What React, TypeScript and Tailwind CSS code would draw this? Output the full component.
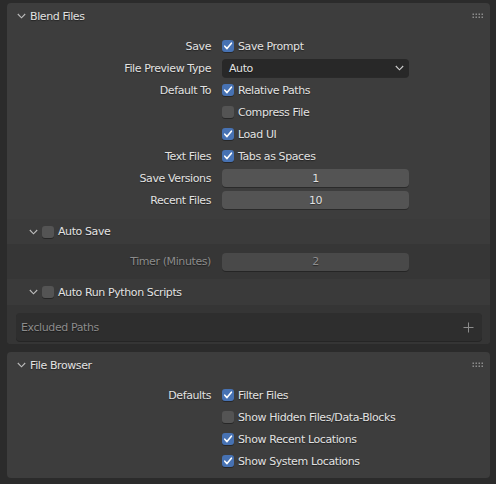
import React from "react";

const font = "font-['DejaVu_Sans',sans-serif] text-[11px] tracking-[-0.4px]";
const shadow = "[text-shadow:0_1px_1px_rgba(0,0,0,0.45)]";

function Chevron({ color = "#bdbdbd" }: { color?: string }) {
  return (
    <svg width="9" height="6" viewBox="0 0 9 6" className="shrink-0">
      <path d="M0.8 1 L4.5 4.8 L8.2 1" fill="none" stroke={color} strokeWidth="1.1" />
    </svg>
  );
}

function Grip() {
  return (
    <svg width="12" height="6" viewBox="0 0 12 6" className="shrink-0">
      {[0, 3, 6, 9].map((x) =>
        [0, 3].map((y) => (
          <rect key={`${x}-${y}`} x={x + 0.5} y={y + 0.5} width="1.5" height="1.5" fill="#8c8c8c" />
        ))
      )}
    </svg>
  );
}

function Check({ on }: { on: boolean }) {
  return (
    <div
      className={`w-[12px] h-[12px] rounded-[3px] shrink-0 flex items-center justify-center shadow-[0_1px_0_rgba(0,0,0,0.35)] ${
        on ? "bg-[#4772b3]" : "bg-[#545454]"
      }`}
    >
      {on && (
        <svg width="10" height="10" viewBox="0 0 10 10">
          <path d="M1.8 5.2 L4 7.6 L8.4 2.2" fill="none" stroke="#ffffff" strokeWidth="1.6" strokeLinecap="round" strokeLinejoin="round" />
        </svg>
      )}
    </div>
  );
}

function Row({ label, children, dim = false }: { label?: string; children: React.ReactNode; dim?: boolean }) {
  return (
    <div className="flex items-center h-[22px]">
      <div className={`w-[204px] text-right pt-[2px] ${dim ? "text-[#8c8c8c]" : "text-[#e2e2e2]"}`}>{label}</div>
      <div className="ml-[11px] w-[187px] flex items-center">{children}</div>
    </div>
  );
}

function CheckItem({ on, text }: { on: boolean; text: string }) {
  return (
    <div className="flex items-center gap-[4px]">
      <Check on={on} />
      <span className="text-[#e2e2e2] pt-[2px]">{text}</span>
    </div>
  );
}

function NumField({ value, dim = false }: { value: string; dim?: boolean }) {
  return (
    <div
      className={`w-full h-[18px] rounded-[4px] flex items-center justify-center pt-[2px] shadow-[0_1px_0_rgba(0,0,0,0.3)] ${
        dim ? "bg-[#494949] text-[#8f8f8f]" : "bg-[#545454] text-[#e2e2e2]"
      }`}
    >
      {value}
    </div>
  );
}

function PanelHeader({ title }: { title: string }) {
  return (
    <div className="h-[26px] flex items-center pl-[10px] pr-[6px]">
      <Chevron />
      <span className="ml-[4px] text-[#e2e2e2] pt-[2px]">{title}</span>
      <div className="ml-auto">
        <Grip />
      </div>
    </div>
  );
}

function SubHeader({ title, bg }: { title: string; bg: string }) {
  return (
    <div className={`flex items-center pl-[22px] ${bg}`}>
      <Chevron />
      <div className="ml-[4px]">
        <Check on={false} />
      </div>
      <span className="ml-[4px] text-[#e2e2e2] pt-[2px]">{title}</span>
    </div>
  );
}

export default function App() {
  return (
    <div className={`w-[496px] h-[484px] bg-[#2b2b2b] pl-[7px] pr-[6px] pt-[3px] ${font} ${shadow} overflow-hidden`}>
      <div className="rounded-[4px] bg-[#3d3d3d] overflow-hidden">
        <PanelHeader title="Blend Files" />
        <div className="pt-[6px]">
          <Row label="Save">
            <CheckItem on text="Save Prompt" />
          </Row>
          <Row label="File Preview Type">
            <div className="w-full h-[18px] rounded-[4px] bg-[#282828] flex items-center pl-[7px] pr-[5px] text-[#e2e2e2] shadow-[0_1px_0_rgba(0,0,0,0.3)]">
              <span className="pt-[2px]">Auto</span>
              <div className="ml-auto">
                <Chevron color="#d0d0d0" />
              </div>
            </div>
          </Row>
          <Row label="Default To">
            <CheckItem on text="Relative Paths" />
          </Row>
          <Row>
            <CheckItem on={false} text="Compress File" />
          </Row>
          <Row>
            <CheckItem on text="Load UI" />
          </Row>
          <Row label="Text Files">
            <CheckItem on text="Tabs as Spaces" />
          </Row>
          <Row label="Save Versions">
            <NumField value="1" />
          </Row>
          <Row label="Recent Files">
            <NumField value="10" />
          </Row>
        </div>
        <div className="h-[8px]" />
        <SubHeader title="Auto Save" bg="h-[25px] bg-[#3b3b3b]" />
        <div className="h-[35px] bg-[#363636] flex flex-col justify-center">
          <Row label="Timer (Minutes)" dim>
            <NumField value="2" dim />
          </Row>
        </div>
        <SubHeader title="Auto Run Python Scripts" bg="h-[26px] bg-[#3a3a3a]" />
        <div className="h-[39px] bg-[#353535] pl-[9px] pr-[8px] pt-[8px]">
          <div className="h-[28px] rounded-[4px] bg-[#2e2e2e] shadow-[0_1px_0_rgba(0,0,0,0.3)] flex items-center pl-[5px] pr-[8px] text-[#8c8c8c]">
            <span className="pt-[2px]">Excluded Paths</span>
            <svg width="11" height="11" viewBox="0 0 11 11" className="ml-auto">
              <path d="M5.5 0.5 V10.5 M0.5 5.5 H10.5" stroke="#8c8c8c" strokeWidth="1" />
            </svg>
          </div>
        </div>
      </div>
      <div className="h-[8px]" />
      <div className="rounded-[4px] bg-[#3d3d3d] overflow-hidden pb-[6px]">
        <PanelHeader title="File Browser" />
        <div className="pt-[6px]">
          <Row label="Defaults">
            <CheckItem on text="Filter Files" />
          </Row>
          <Row>
            <CheckItem on={false} text="Show Hidden Files/Data-Blocks" />
          </Row>
          <Row>
            <CheckItem on text="Show Recent Locations" />
          </Row>
          <Row>
            <CheckItem on text="Show System Locations" />
          </Row>
        </div>
      </div>
    </div>
  );
}
